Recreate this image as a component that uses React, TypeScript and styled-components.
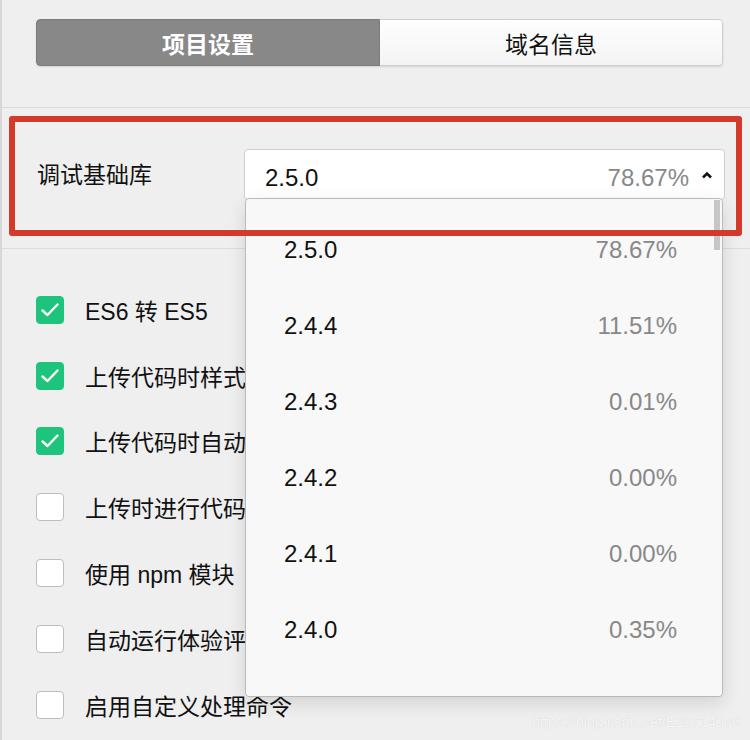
import styled, { createGlobalStyle } from "styled-components";

const GlobalStyle = createGlobalStyle`
	html, body {
		margin: 0;
		padding: 0;
		background: #efefef;
	}
	* {
		box-sizing: border-box;
	}
`;

const FONT = `"Liberation Sans", "Noto Sans CJK SC", sans-serif`;

const Page = styled.div`
	position: relative;
	width: 750px;
	height: 740px;
	overflow: hidden;
	background: #efefef;
	border-left: 2px solid #d7d7d7;
	font-family: ${FONT};
	color: #111;
`;

const TabBar = styled.div`
	height: 108px;
	padding: 19px 27px 0 34px;
	border-bottom: 1px solid #dcdcdc;
`;

const Segmented = styled.div`
	display: flex;
	height: 47px;
	border-radius: 4px;
	overflow: hidden;
	box-shadow: 0 1px 2px rgba(0, 0, 0, 0.12);
`;

const Segment = styled.div<{ $active?: boolean }>`
	flex: 1;
	display: flex;
	align-items: center;
	justify-content: center;
	font-size: 23px;
	font-weight: ${(p) => (p.$active ? 700 : 400)};
	color: ${(p) => (p.$active ? "#fff" : "#111")};
	background: ${(p) =>
		p.$active ? "#888888" : "linear-gradient(#fefefe, #f4f4f4)"};
	border: 1px solid ${(p) => (p.$active ? "#7c7c7c" : "#cfcfcf")};
	border-left-width: ${(p) => (p.$active ? "1px" : "0")};
	&:first-child {
		border-radius: 4px 0 0 4px;
	}
	&:last-child {
		border-radius: 0 4px 4px 0;
	}
`;

const SettingSection = styled.div`
	position: relative;
	height: 141px;
	border-bottom: 1px solid #dcdcdc;
	display: flex;
	align-items: flex-start;
	padding: 41px 25px 0 35px;
`;

const Highlight = styled.div`
	position: absolute;
	left: 7px;
	top: 8px;
	width: 733px;
	height: 120px;
	border: 6px solid #d33a29;
	border-radius: 3px;
	z-index: 10;
	pointer-events: none;
`;

const Label = styled.div`
	width: 207px;
	padding-top: 7px;
	font-size: 23px;
`;

const SelectWrap = styled.div`
	position: relative;
	flex: 1;
`;

const SelectBox = styled.div`
	height: 51px;
	display: flex;
	align-items: center;
	padding: 6px 11px 0 20px;
	background: #fff;
	border: 1px solid #cfcfcf;
	border-radius: 4px;
	font-size: 24px;
`;

const SelectValue = styled.span`
	flex: 1;
`;

const Percent = styled.span`
	color: #888;
`;

const Caret = styled.svg`
	margin-left: 12px;
	margin-top: -6px;
`;

const Dropdown = styled.div`
	position: absolute;
	left: 1px;
	top: 49px;
	width: 478px;
	height: 499px;
	z-index: 5;
	background: #f8f8f8;
	border: 1px solid #b9b9b9;
	border-radius: 4px;
	box-shadow: 0 6px 18px rgba(0, 0, 0, 0.12);
	overflow: hidden;
`;

const ScrollThumb = styled.div`
	position: absolute;
	right: 2px;
	top: 1px;
	width: 6px;
	height: 50px;
	background: #c6c6c6;
`;

const OptionList = styled.div`
	padding-top: 13px;
`;

const Option = styled.div`
	height: 76px;
	display: flex;
	align-items: center;
	justify-content: space-between;
	padding: 0 45px 0 38px;
	font-size: 24px;
`;

const CheckList = styled.div`
	padding: 28px 0 0 34px;
`;

const CheckRow = styled.div`
	height: 65.8px;
	display: flex;
	align-items: center;
	gap: 21px;
	font-size: 23px;
	white-space: nowrap;
`;

const Box = styled.div<{ $checked?: boolean }>`
	width: 28px;
	height: 28px;
	border-radius: 4px;
	display: flex;
	align-items: center;
	justify-content: center;
	background: ${(p) => (p.$checked ? "#1ec47b" : "#fff")};
	border: 1px solid ${(p) => (p.$checked ? "#1ec47b" : "#bdbdbd")};
`;

const Watermark = styled.div`
	position: absolute;
	right: 10px;
	bottom: 10px;
	font-size: 14.5px;
	color: rgba(255, 255, 255, 0.85);
	text-shadow: 0 0 1px rgba(0, 0, 0, 0.18);
	z-index: 20;
`;

const options = [
	{ v: "2.5.0", p: "78.67%" },
	{ v: "2.4.4", p: "11.51%" },
	{ v: "2.4.3", p: "0.01%" },
	{ v: "2.4.2", p: "0.00%" },
	{ v: "2.4.1", p: "0.00%" },
	{ v: "2.4.0", p: "0.35%" },
];

const checks = [
	{ t: "ES6 转 ES5", c: true },
	{ t: "上传代码时样式自动补全", c: true },
	{ t: "上传代码时自动压缩", c: true },
	{ t: "上传时进行代码保护", c: false },
	{ t: "使用 npm 模块", c: false },
	{ t: "自动运行体验评分", c: false },
	{ t: "启用自定义处理命令", c: false },
];

const Tick = () => (
	<svg width="20" height="16" viewBox="0 0 20 16">
		<polyline
			points="2.5,8.5 7.5,13 17.5,2.5"
			fill="none"
			stroke="#fff"
			strokeWidth="2.4"
			strokeLinecap="round"
			strokeLinejoin="round"
		/>
	</svg>
);

export default function App() {
	return (
		<>
			<GlobalStyle />
			<Page>
				<TabBar>
					<Segmented>
						<Segment $active>项目设置</Segment>
						<Segment>域名信息</Segment>
					</Segmented>
				</TabBar>

				<SettingSection>
					<Highlight />
					<Label>调试基础库</Label>
					<SelectWrap>
						<SelectBox>
							<SelectValue>2.5.0</SelectValue>
							<Percent>78.67%</Percent>
							<Caret width="12" height="8" viewBox="0 0 12 8">
								<polyline
									points="2,6.5 6,2.5 10,6.5"
									fill="none"
									stroke="#111"
									strokeWidth="2.6"
								/>
							</Caret>
						</SelectBox>
						<Dropdown>
							<ScrollThumb />
							<OptionList>
								{options.map((o) => (
									<Option key={o.v}>
										<span>{o.v}</span>
										<Percent>{o.p}</Percent>
									</Option>
								))}
							</OptionList>
						</Dropdown>
					</SelectWrap>
				</SettingSection>

				<CheckList>
					{checks.map((c) => (
						<CheckRow key={c.t}>
							<Box $checked={c.c}>{c.c && <Tick />}</Box>
							<span>{c.t}</span>
						</CheckRow>
					))}
				</CheckList>

				<Watermark>https://blog.csdn.net/E20714076</Watermark>
			</Page>
		</>
	);
}
